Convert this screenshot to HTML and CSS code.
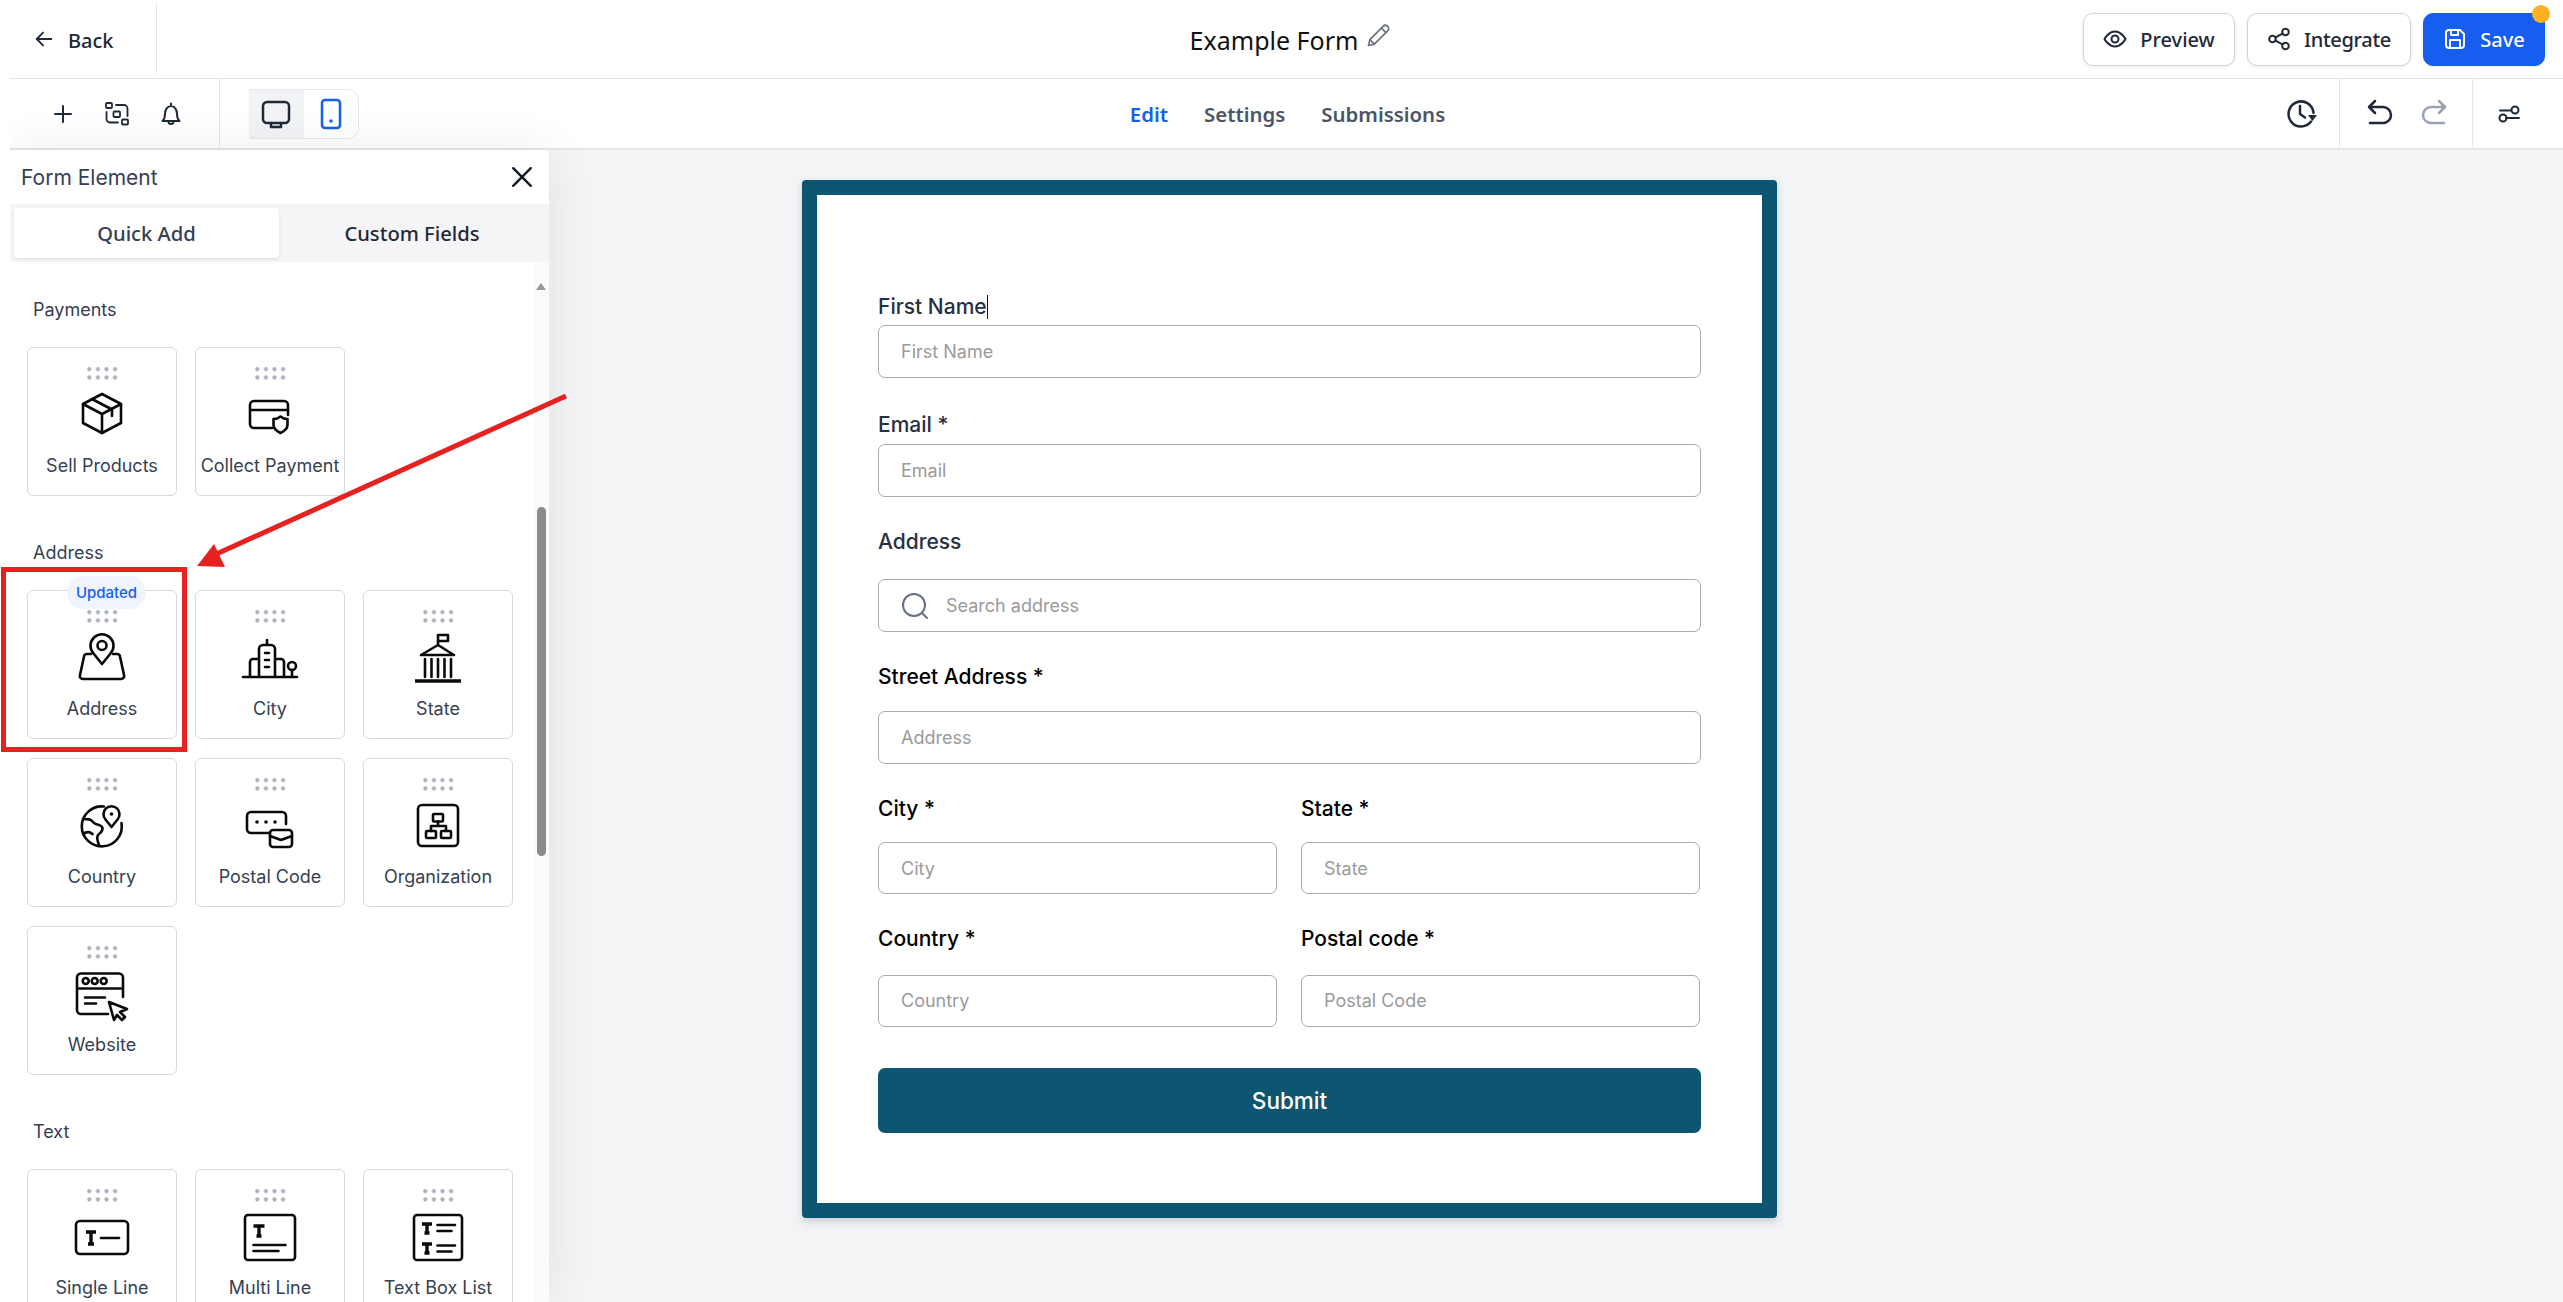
FILE: index.html
```html
<!DOCTYPE html>
<html lang="en">
<head>
<meta charset="utf-8">
<title>Example Form</title>
<link rel="stylesheet" href="styles.css">
</head>
<body>
<div class="app">
 <div class="frame">
  <header class="topbar">
    <div class="top-left">
      <a class="back">
        <svg class="ico24" viewBox="0 0 24 24"><path d="M20 12H4M11 5l-7 7 7 7"/></svg>
        <span>Back</span>
      </a>
    </div>
    <div class="title">
      <span>Example Form</span>
      <svg class="pencil" viewBox="0 0 24 24"><path d="M4 20l1.200-5.200L17 3c1.200-1.200 2.800-1.200 4 0s1.200 2.800 0 4L9.200 18.800z"/><path d="M5.200 14.800l4 4M15.500 4.500l4 4"/></svg>
    </div>
    <div class="top-right">
      <button class="btn"><svg class="ico24" viewBox="0 0 24 24"><path d="M1.500 12S5.500 4.500 12 4.500 22.500 12 22.500 12 18.500 19.500 12 19.500 1.500 12 1.500 12z"/><circle cx="12" cy="12" r="3.500"/></svg>Preview</button>
      <button class="btn btn-int"><svg class="ico24" viewBox="0 0 24 24"><circle cx="18.500" cy="5" r="3.300"/><circle cx="5.500" cy="12" r="3.300"/><circle cx="18.500" cy="19" r="3.300"/><path d="M8.500 10.400l7-3.800M8.500 13.600l7 3.800"/></svg>Integrate</button>
      <button class="btn btn-save"><svg class="ico24" viewBox="0 0 24 24"><path d="M3 6a3 3 0 0 1 3-3h11l4 4v11a3 3 0 0 1-3 3H6a3 3 0 0 1-3-3z"/><path d="M8 3v5h7V3M7 21v-8h10v8"/></svg>Save<i class="dot"></i></button>
    </div>
  </header>

  <nav class="toolbar">
    <div class="tools">
      <div class="tool-icons">
        <svg class="ico24" viewBox="0 0 24 24"><path d="M12 4v16M4 12h16"/></svg>
        <svg class="ico24 thin" viewBox="0 0 24 24"><rect x="1" y="1" width="6" height="5" rx="1"/><rect x="17" y="17.500" width="6" height="5" rx="1"/><rect x="8.500" y="9.500" width="6.500" height="5.500" rx="1"/><path d="M11 3h8a3.500 3.500 0 0 1 3.500 3.500V14M13 20.500H5A3.500 3.500 0 0 1 1.500 17V10"/></svg>
        <svg class="ico24" viewBox="0 0 24 24"><path d="M12 1.500v2.500M3.500 19c1.700-1.500 2.500-3 2.500-7 0-4.500 2.500-8 6-8s6 3.500 6 8c0 4 .8 5.500 2.500 7z"/><path d="M9.500 19.500a2.500 2.500 0 0 0 5 0"/></svg>
      </div>
      <div class="view-toggle">
        <span class="view active"><svg class="ico32" viewBox="0 0 32 32"><rect x="3" y="4" width="26" height="21" rx="4"/><path d="M11 25v4h10v-4"/></svg></span>
        <span class="view"><svg class="ico32 blue" viewBox="0 0 32 32"><rect x="7" y="2" width="18" height="28" rx="3"/><circle class="fill" cx="16" cy="23" r="1.800"/></svg></span>
      </div>
    </div>
    <div class="tabs-nav">
      <a class="current">Edit</a>
      <a>Settings</a>
      <a>Submissions</a>
    </div>
    <div class="history">
      <div class="hist-sec hist-clock"><svg class="ico32" viewBox="0 0 32 32"><path d="M26 23.500A12.500 12.500 0 1 1 28.500 15"/><path d="M15 8v8l5 3.500"/><path class="fill" d="M23 17h9l-4.500 6z"/></svg></div>
      <div class="hist-sec hist-undo">
        <svg class="ico32" viewBox="0 0 32 32"><path d="M11 3l-6 6 6 6M5 9h14a7 7 0 0 1 0 16H6"/></svg>
        <svg class="ico32 muted" viewBox="0 0 32 32"><path d="M21 3l6 6-6 6M27 9H13a7 7 0 0 0 0 16h13"/></svg>
      </div>
      <div class="hist-sec hist-set"><svg class="ico24" viewBox="0 0 24 24"><path d="M3 8.500h11M9 16h13"/><circle cx="18" cy="8" r="3.500"/><circle cx="6" cy="16" r="3.500"/></svg></div>
    </div>
  </nav>

  <div class="workspace">
    <aside class="panel">
      <div class="panel-head">
        <span>Form Element</span>
        <svg class="close" viewBox="0 0 20 20"><path d="M2 2l16 16M18 2L2 18"/></svg>
      </div>
      <div class="panel-tabs">
        <span class="ptab on">Quick Add</span>
        <span class="ptab">Custom Fields</span>
      </div>
      <div class="scroll-area">
        <i class="sb-track"></i><i class="sb-arrow"></i><i class="sb-thumb"></i>

        <h4 class="group first">Payments</h4>
        <div class="grid">
          <div class="card"><i class="grip"></i>
            <svg class="big" viewBox="0 0 48 48"><path d="M24 5l19 10v19L24 44 5 34V15z"/><path d="M5 15l19 10 19-10M24 25v19M14 10l20 10.500V27"/></svg>
            <span>Sell Products</span></div>
          <div class="card"><i class="grip"></i>
            <svg class="big" viewBox="0 0 48 48"><path d="M42 26V16a4 4 0 0 0-4-4H8a4 4 0 0 0-4 4v19a4 4 0 0 0 4 4h18M4 21h38"/><path d="M27.500 30c3 0 5-.8 7-2.500 2 1.700 4 2.500 7 2.500v6c0 3.500-3 6-7 8-4-2-7-4.500-7-8z"/></svg>
            <span>Collect Payment</span></div>
        </div>

        <h4 class="group">Address</h4>
        <div class="grid">
          <div class="card"><em class="badge">Updated</em><i class="grip"></i>
            <svg class="big" viewBox="0 0 48 48"><path d="M24 32l-8.500-10.500a11.500 11.500 0 1 1 17 0z"/><circle cx="24" cy="13.500" r="4.500"/><path d="M13 22H9a3 3 0 0 0-3 2.500L2 43a3 3 0 0 0 3 4h38a3 3 0 0 0 3-4l-4-18.500a3 3 0 0 0-3-2.500h-4"/></svg>
            <span>Address</span></div>
          <div class="card"><i class="grip"></i>
            <svg class="big" viewBox="0 0 48 48"><path d="M-3 45h54M13 45V17a4 4 0 0 1 4-4h8a4 4 0 0 1 4 4v28M21 8v5M19 21h4M19 28h4M19 35h4M13 27H7a3 3 0 0 0-3 3v15M29 27h6a3 3 0 0 1 3 3v15M46 38v7"/><circle cx="46" cy="34" r="4"/></svg>
            <span>City</span></div>
          <div class="card"><i class="grip"></i>
            <svg class="big" viewBox="0 0 48 48"><path d="M24 13V3h10v6H24M24 13L7 23h33zM11 27v18M17.500 27v18M24 27v18M30.500 27v18M37 27v18"/><path class="heavy" d="M1 49h46"/></svg>
            <span>State</span></div>
          <div class="card"><i class="grip"></i>
            <svg class="big" viewBox="0 0 48 48"><path d="M26 6.500A20 20 0 1 0 43.500 23"/><path d="M33.500 27l-6-7.500a8 8 0 1 1 12 0z"/><circle class="fill" cx="33.500" cy="14" r="1.800"/><path d="M5 19c5 0 8 0 10 3s5 2 8 4 1 6-2 8-2 6 0 11"/><path d="M5.500 34c3-3 7-2 9 0"/></svg>
            <span>Country</span></div>
          <div class="card"><i class="grip"></i>
            <svg class="big" viewBox="0 0 48 48"><path d="M40 24v-8a4 4 0 0 0-4-4H5a4 4 0 0 0-4 4v13a4 4 0 0 0 4 4h19"/><rect x="24" y="30" width="22" height="17" rx="3"/><path d="M24 36l11 4 11-4"/><circle class="fill" cx="11" cy="22" r="1.800"/><circle class="fill" cx="20" cy="22" r="1.800"/><circle class="fill" cx="29" cy="22" r="1.800"/></svg>
            <span>Postal Code</span></div>
          <div class="card"><i class="grip"></i>
            <svg class="big" viewBox="0 0 48 48"><rect x="4" y="5" width="40" height="41" rx="4"/><rect x="19" y="14" width="10" height="7.500" rx="1"/><rect x="12" y="31" width="10" height="7" rx="1"/><rect x="27" y="31" width="10" height="7" rx="1"/><path d="M24 21.500V26M17 31v-5h15v5"/></svg>
            <span>Organization</span></div>
          <div class="card"><i class="grip"></i>
            <svg class="big" viewBox="0 0 48 48"><path d="M45 29V9.500a4 4 0 0 0-4-4H3a4 4 0 0 0-4 4V42a4 4 0 0 0 4 4h27M-1 20.500h46M7 29.500h20M7 35.500h11"/><circle cx="7.700" cy="13" r="3"/><circle cx="16.700" cy="13" r="3"/><circle cx="25.700" cy="13" r="3"/><path d="M31 34l18 7-7 3 5 5-3 3-5-5-3 5z"/></svg>
            <span>Website</span></div>
        </div>

        <h4 class="group">Text</h4>
        <div class="grid">
          <div class="card"><i class="grip"></i>
            <svg class="big" viewBox="0 0 48 48"><rect x="-2" y="10" width="52" height="33" rx="4"/><path class="heavy" d="M13 20v13M8 21h10M10 33h6"/><path d="M23 27h18"/></svg>
            <span>Single Line</span></div>
          <div class="card"><i class="grip"></i>
            <svg class="big" viewBox="0 0 48 48"><rect x="-1" y="4" width="50" height="45" rx="3"/><path class="heavy" d="M13 14v11M7.500 15H18.500M10.500 25h5"/><path d="M7.500 34h32M7.500 40h25"/></svg>
            <span>Multi Line</span></div>
          <div class="card"><i class="grip"></i>
            <svg class="big" viewBox="0 0 48 48"><rect x="0" y="4" width="48" height="45" rx="3"/><path class="heavy" d="M13 12v10M8 13h10M10.500 22h5M13 32v10M8 33h10M10.500 42h5"/><path d="M23.500 14h17.500M23.500 20h14M23.500 34.500h17.500M23.500 40.500h14"/></svg>
            <span>Text Box List</span></div>
        </div>
      </div>
    </aside>

    <main class="canvas">
      <section class="form-card">
        <label class="field"><span class="lbl">First Name<i class="caret"></i></span><input class="inp" placeholder="First Name"></label>
        <label class="field field-email"><span class="lbl lbl-near2">Email *</span><input class="inp" placeholder="Email"></label>
        <label class="field"><span class="lbl lbl-far2">Address</span>
          <span class="search"><svg class="search-ico" viewBox="0 0 28 28"><circle cx="13" cy="13" r="11"/><path d="M21 21l5 5"/></svg><input class="inp inp-search" placeholder="Search address"></span></label>
        <label class="field"><span class="lbl lbl-far strong">Street Address *</span><input class="inp" placeholder="Address"></label>
        <div class="two">
          <label class="field"><span class="lbl lbl-city strong">City *</span><input class="inp inp-short" placeholder="City"></label>
          <label class="field"><span class="lbl lbl-city strong">State *</span><input class="inp inp-short" placeholder="State"></label>
        </div>
        <div class="two">
          <label class="field"><span class="lbl lbl-far3 strong">Country *</span><input class="inp inp-short" placeholder="Country"></label>
          <label class="field"><span class="lbl lbl-far3 strong">Postal code *</span><input class="inp inp-short" placeholder="Postal Code"></label>
        </div>
        <button class="submit">Submit</button>
      </section>
    </main>
  </div>
 </div>

  <svg class="annotation" viewBox="0 0 600 800" aria-hidden="true">
    <rect class="ann-box" x="3.500" y="569.500" width="181" height="180"/>
    <path class="ann-line" d="M566 396L212 556"/>
    <path class="ann-head" d="M197 566l17-22 11 23z"/>
  </svg>
</div>
</body>
</html>
```

FILE: styles.css
```css
* { box-sizing: border-box; }
html, body { margin: 0; height: 100%; }
body { background: #fff; font-family: Inter, "Noto Sans", sans-serif; color: #1f2937; overflow: hidden; }
.app { position: relative; width: 2563px; height: 1302px; overflow: hidden; padding-left: 10px; }
.frame { height: 100%; display: flex; flex-direction: column; overflow: hidden; }
svg { fill: none; stroke: currentColor; stroke-linecap: round; stroke-linejoin: round; flex: none; overflow: visible; }
.ico24 { width: 24px; height: 24px; stroke-width: 2; }
.ico24.thin { stroke-width: 1.800; }
.ico32 { width: 32px; height: 32px; stroke-width: 2.500; }
.fill { fill: currentColor; stroke: none; }

.topbar { height: 79px; flex: none; display: grid; grid-template-columns: 1fr auto 1fr; align-items: center; border-bottom: 1px solid #e3e3e3; font-family: "Noto Sans", sans-serif; }
.top-left { height: 72px; align-self: start; margin-top: 3px; }
.back { display: flex; align-items: center; gap: 13px; height: 100%; width: 147px; border-right: 1px solid #e5e7eb; padding: 2px 0 0 23px; font-size: 20px; font-weight: 500; color: #1f2937; }
.back .ico24 { width: 22px; height: 22px; margin-top: -2px; }
.title { display: flex; align-items: center; gap: 6px; margin-left: 8px; font-size: 25px; color: #111; line-height: 32px; padding-top: 1px; }
.pencil { width: 27px; height: 27px; stroke-width: 1.500; color: #6b7280; margin-top: -6px; }
.top-right { display: flex; justify-content: flex-end; align-items: center; gap: 12px; padding-right: 18px; }
.btn { position: relative; height: 53px; width: 152px; display: flex; align-items: center; justify-content: center; gap: 13px; border: 1px solid #d1d5db; border-radius: 10px; background: #fff; box-shadow: 0 1px 3px rgba(16,24,40,.1); font: 500 20px "Noto Sans", sans-serif; color: #1f2937; padding: 0; }
.btn-int { width: 164px; letter-spacing: -.3px; }
.btn-save { width: 122px; background: #155eef; border-color: #155eef; color: #fff; }
.dot { position: absolute; right: -6px; top: -9px; width: 18px; height: 18px; border-radius: 50%; background: #fdb022; }

.toolbar { height: 71px; flex: none; display: grid; grid-template-columns: 1fr auto 1fr; align-items: stretch; border-bottom: 2px solid #e5e7eb; }
.tools { display: flex; align-items: center; }
.tool-icons { width: 210px; height: 100%; display: flex; align-items: center; gap: 30px; padding-left: 41px; border-right: 1px solid #e5e7eb; }
.view-toggle { display: flex; margin-left: 29px; width: 110px; height: 50px; border: 1px solid #e5e7eb; border-left: 0; border-radius: 0 12px 12px 0; overflow: hidden; }
.view { flex: 1; display: flex; align-items: center; justify-content: center; background: #fff; }
.view.active { background: #f2f3f6; }
.blue { color: #155eef; }
.tabs-nav { display: flex; align-items: center; gap: 36px; margin-left: 2px; font: 600 20.400px "Noto Sans", sans-serif; color: #4b5565; }
.tabs-nav .current { color: #155eef; }
.history { display: flex; justify-content: flex-end; }
.hist-sec { display: flex; align-items: center; height: 100%; border-right: 1px solid #e5e7eb; }
.hist-clock { padding-right: 22px; }
.hist-undo { width: 133px; padding-left: 24px; gap: 22px; }
.hist-set { width: 90px; padding-left: 24px; border-right: 0; }
.muted { color: #98a2b3; }

.workspace { flex: 1; display: flex; min-height: 0; }
.panel { width: 539px; display: flex; flex-direction: column; background: #fff; box-shadow: 0 0 48px rgba(0,0,0,.08); position: relative; z-index: 1; border-radius: 4px 4px 0 0; }
.panel-head { height: 54px; flex: none; display: flex; align-items: center; justify-content: space-between; padding: 0 16px 0 11px; font-size: 21px; color: #344054; }
.close { width: 22px; height: 22px; stroke-width: 2.200; color: #111827; }
.panel-tabs { height: 58px; flex: none; display: flex; padding: 4px; background: #f5f5f8; font: 500 20.200px "Noto Sans", sans-serif; }
.ptab { flex: 1; display: flex; align-items: center; justify-content: center; color: #1f2937; }
.ptab.on { flex: none; width: 265px; background: #fff; border-radius: 4px; color: #344054; box-shadow: 0 1px 3px rgba(16,24,40,.12); }
.scroll-area { position: relative; flex: 1; overflow: hidden; padding-left: 17px; }
.sb-track { position: absolute; right: 0; top: 0; bottom: 0; width: 15px; background: #fbfbfb; }
.sb-arrow { position: absolute; left: 526px; top: 21px; border: 5px solid transparent; border-bottom: 7px solid #9a9a9a; border-top: 0; }
.sb-thumb { position: absolute; left: 527px; top: 245px; width: 9px; height: 349px; border-radius: 5px; background: #8c8c8c; }
.group { margin: 0 0 25px 6px; font-size: 18px; line-height: 24px; font-weight: 400; color: #344054; }
.group.first { margin-top: 36px; }
.grid { display: grid; grid-template-columns: repeat(3, 150px); column-gap: 18px; row-gap: 19px; margin-bottom: 45px; }
.card { position: relative; height: 149px; display: flex; flex-direction: column; align-items: center; padding-top: 17px; border: 1px solid #d5d9e2; border-radius: 6px; background: #fff; font-size: 18px; color: #364152; }
.card > span { margin-top: 17px; line-height: 24px; white-space: nowrap; }
.grip { flex: none; width: 34.400px; height: 16.600px; background: radial-gradient(circle, #a9afbd 1.800px, transparent 2.300px) 0 0 / 8.600px 8.300px; }
.big { width: 48px; height: 48px; margin-top: 7px; stroke-width: 2.600; color: #0a0a0a; }
.heavy { stroke-width: 3.400; stroke-linecap: butt; }
.badge { position: absolute; left: 39px; top: -15px; width: 79px; height: 33px; display: flex; align-items: center; justify-content: center; border-radius: 17px; background: #eff4ff; color: #155eef; font: 500 15px Inter, sans-serif; }

.canvas { flex: 1; background: #f3f4f6; padding: 30px 0 0 253px; min-width: 0; }
.form-card { width: 975px; height: 1038px; background: #fff; border: 15px solid #0e5572; border-radius: 4px; box-shadow: 0 4px 8px rgba(50,60,80,.2); padding: 100px 61px 0; display: flex; flex-direction: column; gap: 33px; }
.field { display: flex; flex-direction: column; }
.field-email { margin-top: 2px; }
.lbl { height: 24px; line-height: 24px; font-size: 21px; font-weight: 470; color: #27303f; margin-bottom: 6px; white-space: nowrap; }
.lbl.strong { color: #000; font-weight: 500; }
.lbl-near2 { margin-bottom: 7px; }
.lbl-far { margin-bottom: 22px; }
.lbl-city { margin-bottom: 21px; }
.lbl-far2 { margin-bottom: 25px; }
.lbl-far3 { margin-bottom: 23.500px; }
.caret { display: inline-block; width: 1px; height: 24px; background: #111; vertical-align: top; }
.inp { display: block; width: 100%; height: 53px; border: 1px solid #aaa; border-radius: 7px; background: #fff; padding: 0 22px; font: 400 18px Inter, sans-serif; color: #333; outline: 0; }
.inp-short { height: 52px; }
.inp::placeholder { color: #9a9a9a; opacity: 1; }
.two { display: grid; grid-template-columns: 399px 399px; column-gap: 24px; }
.search { position: relative; display: block; }
.inp-search { padding-left: 67px; }
.search-ico { position: absolute; left: 23px; top: 13px; width: 28px; height: 28px; stroke-width: 2; color: #667085; }
.submit { height: 65px; margin-top: 8.500px; border: 0; border-radius: 7px; background: #0e5572; color: #fff; font: 500 22.500px Inter, sans-serif; }

.annotation { position: absolute; left: 0; top: 0; width: 600px; height: 800px; z-index: 5; pointer-events: none; }
.ann-box { fill: none; stroke: #e72020; stroke-width: 5; stroke-linejoin: miter; }
.ann-line { fill: none; stroke: #e72020; stroke-width: 5; stroke-linecap: butt; }
.ann-head { fill: #e72020; stroke: none; }
```
